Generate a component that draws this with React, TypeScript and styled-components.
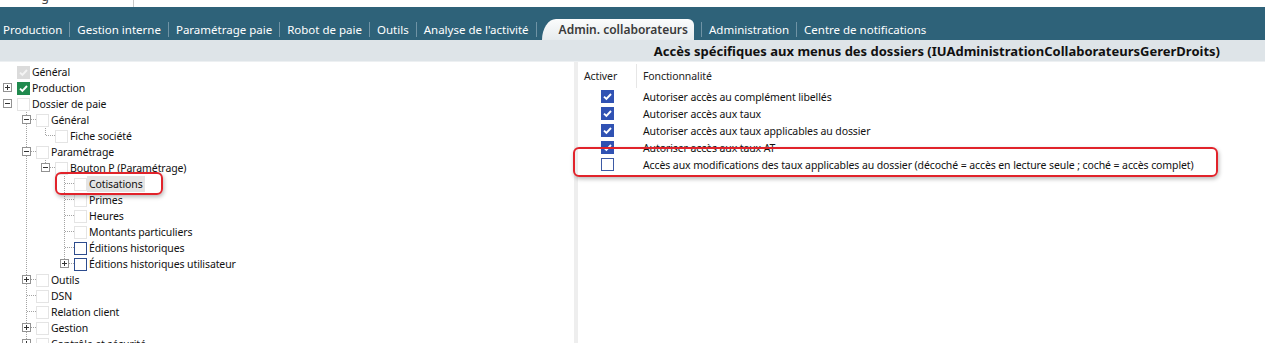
import React from 'react';
import styled, { createGlobalStyle } from 'styled-components';

const FONT = `"Noto Sans", "Open Sans", "DejaVu Sans", sans-serif`;

const GlobalStyle = createGlobalStyle`
  html, body { margin: 0; padding: 0; background: #ffffff; }
  body { font-family: ${FONT}; font-size: 10.5px; letter-spacing: -0.1px; color: #111; overflow: hidden; }
  * { box-sizing: border-box; }
`;

const Page = styled.div`
  position: relative;
  width: 1265px;
  height: 343px;
  overflow: hidden;
  display: flex;
  flex-direction: column;
  background: #fff;
`;

/* ---------- top strip ---------- */
const TopStrip = styled.div`
  height: 7px;
  display: flex;
  overflow: hidden;
  background: #fff;
`;
const TopCell = styled.div`
  width: 134px;
  height: 7px;
  overflow: hidden;
  padding-left: 41px;
  border-right: 1px solid #c9c9c9;
`;
const TopGlyph = styled.span`
  display: block;
  font-size: 13px;
  line-height: 13px;
  margin-top: -10px;
  color: #444;
`;

/* ---------- nav bar ---------- */
const NavBar = styled.div`
  height: 33px;
  background: #2e6279;
  display: flex;
  align-items: flex-end;
`;
const NavStrip = styled.div`
  height: 21px;
  display: flex;
  align-items: center;
`;
const NavItem = styled.div<{ $first?: boolean }>`
  height: 21px;
  display: flex;
  align-items: center;
  padding: 0 7px 0 ${(p) => (p.$first ? 3 : 7)}px;
  color: #ffffff;
  font-size: 11.5px;
  letter-spacing: 0;
  white-space: nowrap;
`;
const NavSep = styled.span`
  width: 1px;
  height: 15px;
  background: #6f93a5;
`;
const ActiveTab = styled.div`
  height: 21px;
  display: flex;
  align-items: center;
  margin: 0 7px 0 5px;
  padding: 0 6px 0 17px;
  border-radius: 14px 6px 0 0 / 21px 6px 0 0;
  background: linear-gradient(#fbfcfc, #e6ebee);
  color: #3a3a3a;
  font-size: 12px;
  letter-spacing: 0;
  font-weight: 600;
  white-space: nowrap;
`;

/* ---------- header ---------- */
const HeaderBar = styled.div`
  height: 22px;
  background: #dee4e8;
  border-bottom: 1px solid #edf0f2;
  display: flex;
  align-items: center;
  justify-content: flex-end;
  padding-right: 45px;
  font-weight: 700;
  font-size: 13px;
  letter-spacing: 0;
  color: #111;
`;

/* ---------- body ---------- */
const Body = styled.div`
  flex: 1;
  display: flex;
  min-height: 0;
`;
const TreePane = styled.div`
  width: 574px;
  padding-top: 2px;
  overflow: hidden;
`;
const Splitter = styled.div`
  width: 4px;
  background: #eeeeee;
`;
const RightPane = styled.div`
  flex: 1;
  padding-top: 2px;
`;

/* ---------- tree ---------- */
const TreeRow = styled.div`
  height: 16px;
  display: flex;
  align-items: center;
  padding-left: 3px;
  white-space: nowrap;
`;
const Guide = styled.svg`
  width: 19px;
  height: 16px;
  flex: none;
  display: block;
`;
const Connector = styled.svg`
  width: 14px;
  height: 16px;
  flex: none;
  display: block;
`;

type CheckKind = 'empty' | 'disabled' | 'green' | 'blue';

const TreeBox = styled.span<{ $kind: CheckKind }>`
  width: 13px;
  height: 13px;
  flex: none;
  display: flex;
  align-items: center;
  justify-content: center;
  background: ${(p) =>
    p.$kind === 'green' ? '#208a4e' : p.$kind === 'disabled' ? '#dbdbdb' : '#ffffff'};
  border: 1px solid
    ${(p) =>
      p.$kind === 'blue'
        ? '#2d4c8e'
        : p.$kind === 'empty'
        ? '#e4e4e4'
        : 'transparent'};
`;
const TreeLabel = styled.span<{ $selected?: boolean }>`
  padding: 1px 2px;
  line-height: 14px;
  background: ${(p) => (p.$selected ? '#e4e4e4' : 'transparent')};
  color: #111;
`;

const Tick = ({ color = '#fff' }: { color?: string }) => (
  <svg width="11" height="11" viewBox="0 0 11 11">
    <polyline points="2,5.6 4.4,8 9,3" fill="none" stroke={color} strokeWidth="1.9" />
  </svg>
);

type TNode = {
  label: string;
  check: CheckKind;
  exp?: '+' | '-';
  selected?: boolean;
  children?: TNode[];
};

const tree: TNode[] = [
  { label: 'Général', check: 'disabled' },
  { label: 'Production', check: 'green', exp: '+' },
  {
    label: 'Dossier de paie',
    check: 'empty',
    exp: '-',
    children: [
      { label: 'Général', check: 'empty', exp: '-', children: [{ label: 'Fiche société', check: 'empty' }] },
      {
        label: 'Paramétrage',
        check: 'empty',
        exp: '-',
        children: [
          {
            label: 'Bouton P (Paramétrage)',
            check: 'empty',
            exp: '-',
            children: [
              { label: 'Cotisations', check: 'empty', selected: true },
              { label: 'Primes', check: 'empty' },
              { label: 'Heures', check: 'empty' },
              { label: 'Montants particuliers', check: 'empty' },
              { label: 'Éditions historiques', check: 'blue' },
              { label: 'Éditions historiques utilisateur', check: 'blue', exp: '+' },
            ],
          },
        ],
      },
      { label: 'Outils', check: 'empty', exp: '+' },
      { label: 'DSN', check: 'empty' },
      { label: 'Relation client', check: 'empty' },
      { label: 'Gestion', check: 'empty', exp: '+' },
      { label: 'Contrôle et sécurité', check: 'empty', exp: '+' },
    ],
  },
];

type FlatRow = { node: TNode; level: number; guides: boolean[]; last: boolean };

function flatten(nodes: TNode[], level: number, guides: boolean[], out: FlatRow[]) {
  nodes.forEach((n, i) => {
    const last = i === nodes.length - 1;
    out.push({ node: n, level, guides, last });
    if (n.children && n.exp === '-') {
      flatten(n.children, level + 1, level >= 1 ? [...guides, !last] : guides, out);
    }
  });
  return out;
}

const DOT = '#a3a3a3';

const ExpanderBox = ({ kind }: { kind: '+' | '-' }) => (
  <g>
    <rect x="0.5" y="3.5" width="8" height="8" fill="#fff" stroke="#929292" />
    <line x1="2" y1="7.5" x2="7" y2="7.5" stroke="#333" />
    {kind === '+' && <line x1="4.5" y1="5" x2="4.5" y2="10" stroke="#333" />}
  </g>
);

const TreeLine = ({ row }: { row: FlatRow }) => {
  const { node, level, guides, last } = row;
  return (
    <TreeRow>
      {level >= 1 && <Guide viewBox="0 0 19 16" />}
      {guides.map((g, i) => (
        <Guide key={i} viewBox="0 0 19 16">
          {g && <line x1="4.5" y1="0" x2="4.5" y2="16" stroke={DOT} strokeDasharray="1 1" />}
        </Guide>
      ))}
      <Connector viewBox="0 0 14 16">
        {level >= 1 && (
          <>
            <line x1="4.5" y1="0" x2="4.5" y2={last ? 8 : 16} stroke={DOT} strokeDasharray="1 1" />
            <line x1={node.exp ? 9 : 5} y1="7.5" x2="14" y2="7.5" stroke={DOT} strokeDasharray="1 1" />
          </>
        )}
        {node.exp && <ExpanderBox kind={node.exp} />}
      </Connector>
      <TreeBox $kind={node.check}>
        {node.check === 'green' && <Tick />}
        {node.check === 'disabled' && <Tick color="#f4f4f4" />}
      </TreeBox>
      <TreeLabel $selected={node.selected}>{node.label}</TreeLabel>
    </TreeRow>
  );
};

/* ---------- right grid ---------- */
const Grid = styled.div`
  display: grid;
  grid-template-columns: 59px 1fr;
  grid-auto-rows: 17px;
`;
const HeadRow = styled.div`
  display: grid;
  grid-template-columns: 59px 1fr;
`;
const HeadCell = styled.div<{ $sep?: boolean }>`
  height: 24px;
  display: flex;
  align-items: center;
  padding-left: 6px;
  color: #222;
  border-right: ${(p) => (p.$sep ? '1px solid #e6e6e6' : 'none')};
`;
const CheckCell = styled.div`
  display: flex;
  align-items: center;
  justify-content: center;
`;
const TextCell = styled.div`
  display: flex;
  align-items: center;
  padding-left: 6px;
  white-space: nowrap;
  color: #111;
`;
const BlueBox = styled.span<{ $on: boolean }>`
  width: 13px;
  height: 13px;
  display: flex;
  align-items: center;
  justify-content: center;
  background: ${(p) => (p.$on ? '#3052b3' : '#fff')};
  border: 1px solid ${(p) => (p.$on ? '#3052b3' : '#3d5aa5')};
`;

const features = [
  { on: true, label: 'Autoriser accès au complément libellés' },
  { on: true, label: 'Autoriser accès aux taux' },
  { on: true, label: 'Autoriser accès aux taux applicables au dossier' },
  { on: true, label: 'Autoriser accès aux taux AT' },
  {
    on: false,
    label:
      'Accès aux modifications des taux applicables au dossier (décoché = accès en lecture seule ; coché = accès complet)',
  },
];

/* ---------- annotations ---------- */
const Highlight = styled.div<{ $l: number; $t: number; $w: number; $h: number }>`
  position: absolute;
  left: ${(p) => p.$l}px;
  top: ${(p) => p.$t}px;
  width: ${(p) => p.$w}px;
  height: ${(p) => p.$h}px;
  border: 2px solid #e1232b;
  border-radius: 6px;
  box-shadow: 1px 2px 4px rgba(0, 0, 0, 0.28);
  pointer-events: none;
`;

const navItems = ['Production', 'Gestion interne', 'Paramétrage paie', 'Robot de paie', 'Outils', "Analyse de l'activité"];
const navItemsAfter = ['Administration', 'Centre de notifications'];

export default function App() {
  const rows = flatten(tree, 0, [], []);
  return (
    <Page>
      <GlobalStyle />
      <TopStrip>
        <TopCell>
          <TopGlyph>g</TopGlyph>
        </TopCell>
      </TopStrip>
      <NavBar>
        <NavStrip>
          {navItems.map((t, i) => (
            <React.Fragment key={t}>
              {i > 0 && <NavSep />}
              <NavItem $first={i === 0}>{t}</NavItem>
            </React.Fragment>
          ))}
          <NavSep />
          <ActiveTab>Admin. collaborateurs</ActiveTab>
          {navItemsAfter.map((t) => (
            <React.Fragment key={t}>
              <NavSep />
              <NavItem>{t}</NavItem>
            </React.Fragment>
          ))}
        </NavStrip>
      </NavBar>
      <HeaderBar>Accès spécifiques aux menus des dossiers (IUAdministrationCollaborateursGererDroits)</HeaderBar>
      <Body>
        <TreePane>
          {rows.map((r, i) => (
            <TreeLine key={i} row={r} />
          ))}
        </TreePane>
        <Splitter />
        <RightPane>
          <HeadRow>
            <HeadCell $sep>Activer</HeadCell>
            <HeadCell>Fonctionnalité</HeadCell>
          </HeadRow>
          <Grid>
            {features.map((f) => (
              <React.Fragment key={f.label}>
                <CheckCell>
                  <BlueBox $on={f.on}>{f.on && <Tick />}</BlueBox>
                </CheckCell>
                <TextCell>{f.label}</TextCell>
              </React.Fragment>
            ))}
          </Grid>
        </RightPane>
      </Body>
      <Highlight $l={55} $t={172} $w={108} $h={23} />
      <Highlight $l={573} $t={147} $w={645} $h={30} />
    </Page>
  );
}
